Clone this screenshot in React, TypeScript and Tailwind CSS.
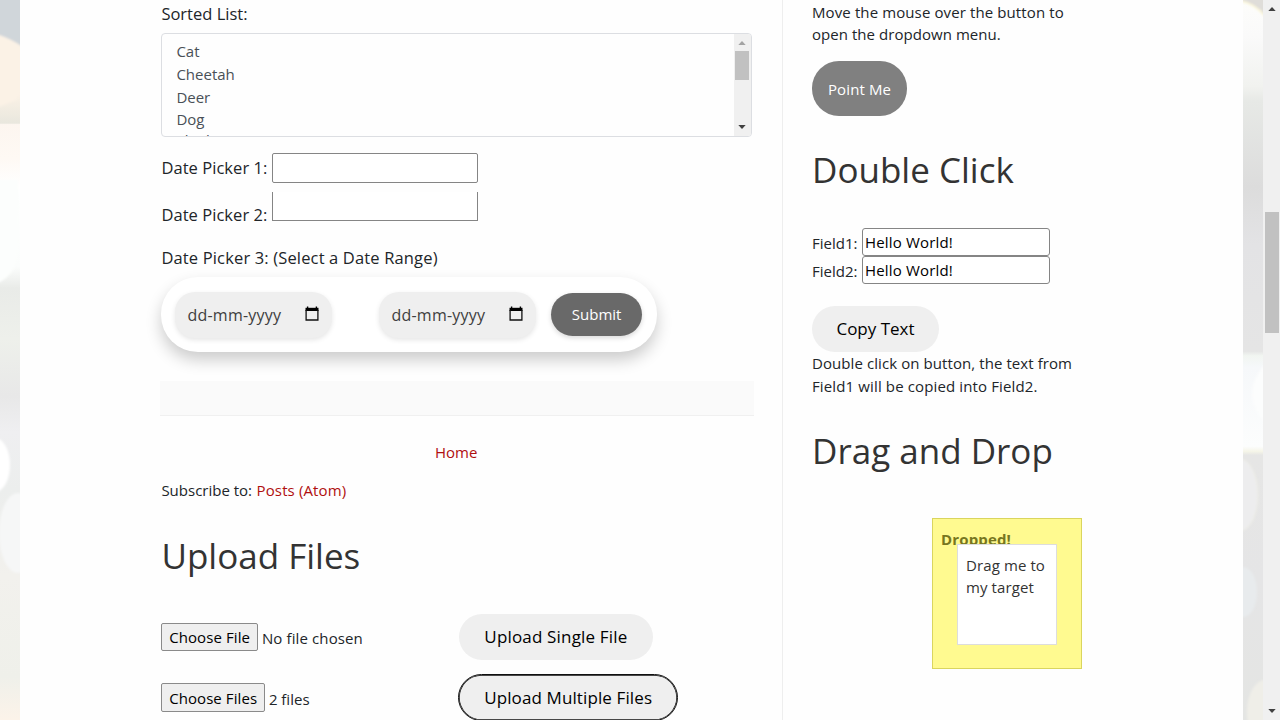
import type { ReactNode } from "react";

function LeftBackdrop() {
  return (
    <svg width="20" height="720" viewBox="0 0 20 720" className="block shrink-0">
      <defs>
        <linearGradient id="lb" x1="0" y1="0" x2="0" y2="1">
          <stop offset="0" stopColor="#cdd3d9" />
          <stop offset="0.06" stopColor="#d8dbdb" />
          <stop offset="0.08" stopColor="#faf1e6" />
          <stop offset="0.13" stopColor="#fbf2e6" />
          <stop offset="0.171" stopColor="#e9e7de" />
          <stop offset="0.173" stopColor="#fdf6f0" />
          <stop offset="0.22" stopColor="#fef9f4" />
          <stop offset="0.26" stopColor="#ffffff" />
          <stop offset="0.37" stopColor="#fbfdfc" />
          <stop offset="0.40" stopColor="#e9ebe8" />
          <stop offset="0.47" stopColor="#eef0eb" />
          <stop offset="0.55" stopColor="#e8e8e8" />
          <stop offset="0.60" stopColor="#efeff1" />
          <stop offset="0.68" stopColor="#eceeed" />
          <stop offset="0.80" stopColor="#f2f1ed" />
          <stop offset="0.94" stopColor="#eff0ea" />
          <stop offset="1" stopColor="#fcf3e9" />
        </linearGradient>
        <filter id="lf" x="-20%" y="-20%" width="140%" height="140%">
          <feGaussianBlur stdDeviation="1" />
        </filter>
      </defs>
      <rect width="20" height="720" fill="url(#lb)" />
      <g filter="url(#lf)">
        <path d="M-4 -4H24V47Q12 39 -4 34Z" fill="#d0d6da" />
        <path d="M-4 34Q12 39 24 48V85L16 100L-4 108Z" fill="#fbf2e6" />
        <path d="M-4 180H18Q22 250 14 268Q8 279 -4 284Z" fill="#fcfefd" />
        <ellipse cx="-5" cy="465" rx="15" ry="27" fill="#ffffff" />
        <ellipse cx="18" cy="533" rx="19" ry="40" fill="#f6f7f7" />
      </g>
    </svg>
  );
}

function RightBackdrop() {
  return (
    <svg width="20" height="720" viewBox="0 0 20 720" className="block shrink-0">
      <defs>
        <linearGradient id="rb" x1="0" y1="0" x2="0" y2="1">
          <stop offset="0" stopColor="#fdfdfb" />
          <stop offset="0.05" stopColor="#fafafa" />
          <stop offset="0.12" stopColor="#f1f2ef" />
          <stop offset="0.14" stopColor="#e7e9e6" />
          <stop offset="0.26" stopColor="#dcdcdc" />
          <stop offset="0.34" stopColor="#e3e3e5" />
          <stop offset="0.488" stopColor="#e5e5e5" />
          <stop offset="0.494" stopColor="#f1f5f1" />
          <stop offset="0.51" stopColor="#f6f8fa" />
          <stop offset="0.62" stopColor="#fcfdfd" />
          <stop offset="0.627" stopColor="#f5f5e8" />
          <stop offset="0.632" stopColor="#e6e6e5" />
          <stop offset="0.8" stopColor="#e5e5e6" />
          <stop offset="1" stopColor="#e4e5e3" />
        </linearGradient>
        <filter id="rf" x="-20%" y="-20%" width="140%" height="140%">
          <feGaussianBlur stdDeviation="1.2" />
        </filter>
      </defs>
      <rect width="20" height="720" fill="url(#rb)" />
      <g filter="url(#rf)">
        <path d="M-2 -2H22V16Q12 4 -2 1Z" fill="#dfddd9" />
        <path d="M-2 1Q12 4 22 16" fill="none" stroke="#faf6dc" strokeWidth="2" />
        <path d="M22 364Q8 380 9 396Q11 412 22 422Z" fill="#fcfdfd" />
        <ellipse cx="-3" cy="495" rx="18" ry="36" fill="#ededee" stroke="#ecece4" />
        <ellipse cx="0" cy="592" rx="14" ry="25" fill="#e8ebed" />
        <ellipse cx="22" cy="712" rx="18" ry="32" fill="#efeee8" />
      </g>
    </svg>
  );
}

function Arrow({ up, color }: { up?: boolean; color: string }) {
  return (
    <svg width="8" height="4" viewBox="0 0 8 4" className="block">
      <path d={up ? "M0.3 4L4 0.1L7.7 4Z" : "M0.3 0L4 3.9L7.7 0Z"} fill={color} />
    </svg>
  );
}

function Heading({ children, className = "" }: { children: ReactNode; className?: string }) {
  return (
    <h2 className={"h-[48px] text-[35px] leading-[48px] whitespace-nowrap text-[#333333] " + className}>
      {children}
    </h2>
  );
}

function DateField() {
  return (
    <div className="flex h-[46px] w-[157px] items-center justify-between rounded-[20px] bg-[#efefef] pr-[13px] pl-[12px] shadow-[0_2px_5px_rgba(0,0,0,0.1)]">
      <span className="text-base tracking-[0.24px] text-[#404040]">dd-mm-yyyy</span>
      <svg width="14" height="15" viewBox="0 0 14 15" className="mb-0.5">
        <path d="M2.6 0.5V2M11.4 0.5V2" stroke="#000" strokeWidth="1.4" fill="none" />
        <path d="M0.5 1.8H13.5V5H0.5Z" fill="#000" />
        <path d="M1.1 4V14H12.9V4" stroke="#111" strokeWidth="1.3" fill="none" />
      </svg>
    </div>
  );
}

function MainColumn() {
  return (
    <main className="w-[594px] shrink-0 pt-[3px]">
      <div className="pl-[1.4px]">
        <div className="h-[22px] text-[16.5px] leading-[22px]">Sorted List:</div>
        <div className="mt-2 flex h-[104px] w-[590.5px] overflow-hidden rounded-[4px] border border-[#dcdee2]">
          <ul className="flex-1 pt-[6px] pl-[14px] text-[15px] leading-[22.8px] text-[#495057]">
            <li>Cat</li>
            <li>Cheetah</li>
            <li>Deer</li>
            <li>Dog</li>
            <li className="-mt-[2px]">Elephant</li>
          </ul>
          <div className="flex w-[17px] flex-col items-center bg-[#f0f0f0] pt-[7px] pb-[7px]">
            <Arrow up color="#a3a3a3" />
            <div className="mt-[6px] h-[29px] w-[14px] bg-[#c1c1c1]" />
            <div className="mt-auto">
              <Arrow color="#404040" />
            </div>
          </div>
        </div>
        <div className="mt-4 flex h-[30px] items-center text-[16.5px] tracking-[0.05px]">
          <span className="w-[110.4px] pt-px">Date Picker 1:</span>
          <div className="h-[30px] w-[206px] rounded-[2px] border border-[#858585] bg-white" />
        </div>
        <div className="mt-[9px] flex h-[34px] items-start text-[16.5px] tracking-[0.05px]">
          <span className="w-[110.4px] pt-3 leading-[22px]">Date Picker 2:</span>
          <div className="h-[29px] w-[206px] border border-t-0 border-[#858585] bg-white" />
        </div>
        <div className="mt-[21px] h-[22px] text-[16.5px] leading-[22px] tracking-[0.15px]">
          Date Picker 3: (Select a Date Range)
        </div>
        <div className="mt-[8px] flex h-[75px] w-[495.5px] items-center rounded-[37px] bg-white pl-[14px] shadow-[0_8px_16px_rgba(0,0,0,0.2)]">
          <DateField />
          <div className="w-[47px]" />
          <DateField />
          <button className="ml-[15px] h-[43px] w-[90.5px] rounded-full bg-[#696969] text-[15px] text-white shadow-[0_2px_5px_rgba(0,0,0,0.15)]">
            Submit
          </button>
        </div>
      </div>
      <div className="mt-[29px] h-[35px] border-b border-[#f0f0f0] bg-[#fafafa]" />
      <div className="pl-[1.4px] text-[15px] leading-[22px]">
        <div className="mt-[25px] pr-[3px] text-center text-[#b00f0f]">Home</div>
        <div className="mt-4">
          Subscribe to: <span className="ml-[0.6px] tracking-[0.13px] text-[#b00f0f]">Posts (Atom)</span>
        </div>
        <Heading className="mt-[31px]">Upload Files</Heading>
        <div className="mt-[34px] flex h-[46px] items-center">
          <div className="flex w-[297.5px] items-center">
            <span className="flex h-7 w-[96.5px] items-center justify-center rounded-[2px] border border-[#8a8a8a] bg-[#efefef] tracking-[0.1px] text-black">
              Choose File
            </span>
            <span className="ml-1 pt-0.5 tracking-[0.12px]">No file chosen</span>
          </div>
          <button className="h-[46px] w-[194px] rounded-full bg-[#efefef] text-[17px] tracking-[0.17px] text-black">
            Upload Single File
          </button>
        </div>
        <div className="mt-[14px] flex h-[47px] items-center">
          <div className="flex w-[297px] items-center">
            <span className="flex h-[29px] w-[103.5px] items-center justify-center rounded-[2px] border border-[#8a8a8a] bg-[#efefef] tracking-[0.08px] text-black">
              Choose Files
            </span>
            <span className="ml-1 pt-0.5">2 files</span>
          </div>
          <button className="h-[47px] w-[219.5px] rounded-full border border-[#101010] bg-[#efefef] text-[17px] tracking-[0.11px] text-black shadow-[inset_0_0_0_0.7px_#101010]">
            Upload Multiple Files
          </button>
        </div>
      </div>
    </main>
  );
}

function HelloField({ label }: { label: string }) {
  return (
    <div className="flex h-7 items-center">
      <span className="w-[49.5px] pt-0.5">{label}</span>
      <div className="flex h-7 w-[188.5px] items-center rounded-[3px] border border-[#858585] bg-white pl-[2.5px] tracking-[0.17px] text-black">
        Hello World!
      </div>
    </div>
  );
}

function Sidebar() {
  return (
    <aside className="ml-[28px] h-[720px] w-[340px] shrink-0 border-l border-[#eeeeee] pt-[1px] pl-[29px] text-[15px] leading-[22.5px] whitespace-nowrap">
      <p className="leading-[22px]">
        <span className="tracking-[0.11px]">Move the mouse over the button to</span>
        <br />
        <span className="tracking-[0.05px]">open the dropdown menu.</span>
      </p>
      <button className="mt-[16px] block h-[55px] w-[95px] rounded-[27px] bg-[#808080] pt-px tracking-[0.1px] text-white">
        Point Me
      </button>
      <Heading className="mt-[30px]">Double Click</Heading>
      <div className="mt-[34px]">
        <HelloField label="Field1:" />
        <HelloField label="Field2:" />
      </div>
      <button className="mt-[22px] block h-[46px] w-[127px] rounded-full bg-[#efefef] pt-px text-[17px] text-black">
        Copy Text
      </button>
      <p>
        <span className="tracking-[0.08px]">Double click on button, the text from</span>
        <br />
        <span className="tracking-[0.13px]">Field1 will be copied into Field2.</span>
      </p>
      <Heading className="mt-[30px]">Drag and Drop</Heading>
      <div className="relative mt-[43px] ml-[120px] h-[151px] w-[150px] border border-[#dad55e] bg-[#fffa90] pt-[8.5px] pl-[8px] font-bold tracking-[0.15px] text-[#777620]">
        Dropped!
        <div className="absolute top-[25px] left-[24px] h-[100.5px] w-[100px] border border-[#dddddd] bg-white pt-[9px] pl-[8px] leading-[22px] font-normal tracking-[0.1px] text-[#333333]">
          Drag me to
          <br />
          my target
        </div>
      </div>
    </aside>
  );
}

function PageScrollbar() {
  return (
    <div className="flex h-[720px] w-[17px] shrink-0 flex-col items-center bg-[#f0f0f0] pt-[7px] pb-[7px]">
      <Arrow up color="#404040" />
      <div className="mt-[201px] h-[121px] w-[14px] bg-[#c1c1c1]" />
      <div className="mt-auto">
        <Arrow color="#404040" />
      </div>
    </div>
  );
}

export default function App() {
  return (
    <div className="flex h-[720px] w-[1280px] overflow-hidden bg-[#fefefe] font-['Open_Sans','Noto_Sans',sans-serif] text-[#212529]">
      <LeftBackdrop />
      <div className="flex w-[1223px] shrink-0 overflow-hidden bg-[#fefefe] pl-[140px]">
        <MainColumn />
        <Sidebar />
      </div>
      <RightBackdrop />
      <PageScrollbar />
    </div>
  );
}
